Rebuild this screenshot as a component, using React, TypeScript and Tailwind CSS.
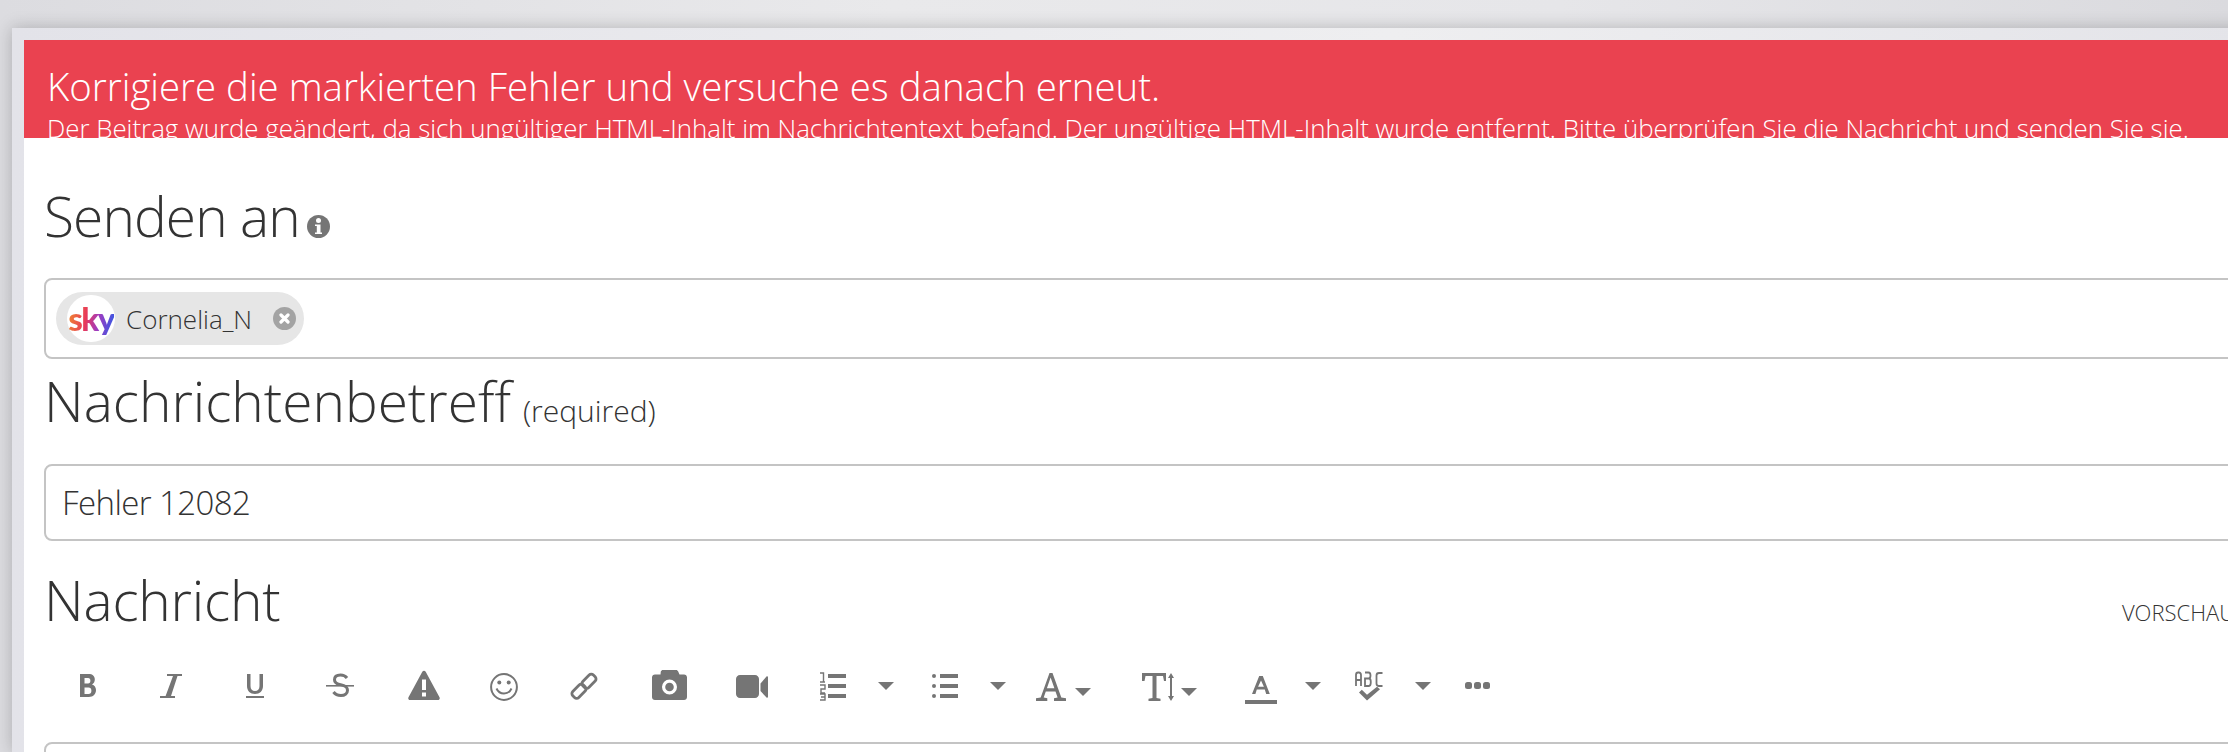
const FONT = "font-['Open_Sans',sans-serif]";

function Caret({ className }: { className: string }) {
  return (
    <svg className={`h-[32px] w-[16px] shrink-0 ${className}`} viewBox="0 0 16 32" fill="#757575">
      <path d="M0 0h16L8 8z" />
    </svg>
  );
}

function Glyph({ w, className, children }: { w: number; className: string; children: React.ReactNode }) {
  return (
    <svg className={`h-[32px] shrink-0 ${className}`} viewBox={`0 0 ${w} 32`} fill="#757575">
      {children}
    </svg>
  );
}

function Toolbar() {
  return (
    <div className="flex items-start pl-[36px] pt-[38px]">
      {/* bold */}
      <Glyph w={16} className="w-[16px]">
        <path fillRule="evenodd" d="M0 5h8.500c4 0 6.300 2 6.300 5.600 0 2.200-1 3.900-2.800 4.800 2.500.8 4 2.800 4 5.600 0 4.200-2.800 7-7.200 7H0zm4.500 4v5.500h3.600c1.500 0 2.300-1 2.300-2.800S9.600 9 8.100 9zm0 9.500V25h4c1.800 0 2.900-1.200 2.900-3.300s-1.100-3.200-2.900-3.200z" />
      </Glyph>
      {/* italic */}
      <Glyph w={22} className="ml-[64px] w-[22px]">
        <path d="M7 5h15v2h-4.500L11 27h4v2H0v-2h5.600L13 7H7z" />
      </Glyph>
      {/* underline */}
      <Glyph w={18} className="ml-[64px] w-[18px]">
        <path d="M1 5h3.500v12c0 3.200 1.800 5 4.500 5s4.500-1.800 4.500-5V5H17v12c0 5-3.300 8-8 8s-8-3-8-8zM0 27h18v2H0z" />
      </Glyph>
      {/* strike */}
      <Glyph w={28} className="ml-[62px] w-[28px]">
        <path d="M0 16h28v1.600H0z" />
        <path fill="none" stroke="#757575" strokeWidth="3" d="M21 9c-1.500-2-3.800-3-6.500-3-3.700 0-6 1.800-6 4.700 0 2.300 1.500 3.800 5 4.700l2 .5c4 1 6 2.700 6 5.300 0 3-2.500 5.300-6.600 5.300-3.300 0-5.800-1.300-7.400-3.500" />
      </Glyph>
      {/* warning */}
      <Glyph w={32} className="ml-[54px] w-[32px]">
        <path fillRule="evenodd" d="M14.300 2.800c.8-1.400 2.600-1.400 3.400 0l13.800 25.400c.7 1.300-.1 2.800-1.600 2.800H2.100C.6 31-.2 29.500.5 28.200zM14 10.500V21h4V10.500zM14 23.500V27.500h4v-4z" />
      </Glyph>
      {/* smile */}
      <Glyph w={28} className="ml-[50px] w-[28px]">
        <circle cx="14" cy="18" r="12.900" fill="none" stroke="#757575" strokeWidth="2" />
        <circle cx="9.300" cy="13.500" r="2" />
        <circle cx="18.700" cy="13.500" r="2" />
        <path fill="none" stroke="#757575" strokeWidth="2" d="M6.500 19.500c1.500 3.300 4.200 5 7.500 5s6-1.700 7.500-5" />
      </Glyph>
      {/* link */}
      <Glyph w={28} className="ml-[52px] w-[28px]">
        <rect x="11.500" y="8" width="15" height="8.500" rx="3" fill="none" stroke="#757575" strokeWidth="2.800" transform="rotate(-45 19 12.300)" />
        <rect x="1.500" y="18" width="15" height="8.500" rx="3" fill="none" stroke="#757575" strokeWidth="2.800" transform="rotate(-45 9 22.300)" />
      </Glyph>
      {/* camera */}
      <Glyph w={35} className="ml-[54px] w-[35px]">
        <path fillRule="evenodd" d="M11 1h13c1 0 1.800.6 2.200 1.500L27.500 5.500H32c1.700 0 3 1.300 3 3V28c0 1.700-1.300 3-3 3H3c-1.700 0-3-1.300-3-3V8.500c0-1.700 1.300-3 3-3h5.500l.3-3C9.200 1.600 10 1 11 1zm6.500 9.500a7.500 7.500 0 1 0 0 15 7.500 7.500 0 0 0 0-15zm0 3.200a4.300 4.300 0 1 1 0 8.600 4.300 4.300 0 0 1 0-8.600z" />
      </Glyph>
      {/* video */}
      <Glyph w={32} className="ml-[49px] w-[32px]">
        <path d="M4 6h15c2.200 0 4 1.800 4 4v15c0 2.200-1.800 4-4 4H4c-2.200 0-4-1.800-4-4V10c0-2.200 1.800-4 4-4zM24.500 14.500 30.500 7.500c.5-.5 1.500-.2 1.500.6v19.800c0 .8-1 1.100-1.500.6l-6-6.500z" />
      </Glyph>
      {/* ordered list */}
      <Glyph w={26} className="ml-[52px] w-[26px]">
        <path d="M8 5h18v4H8zM8 15h18v4H8zM8 25h18v4H8z" />
        <path fill="none" stroke="#757575" strokeWidth="1.400" d="M0 4h3.500v9M0 13h5M0 16h5v4H1v4h4M0 25h5v6H0M1 28h4" />
      </Glyph>
      <Caret className="ml-[32px] mt-[13px]" />
      {/* unordered list */}
      <Glyph w={26} className="ml-[38px] w-[26px]">
        <circle cx="2" cy="7" r="2" />
        <circle cx="2" cy="17" r="2" />
        <circle cx="2" cy="27" r="2" />
        <path d="M8 5h18v4H8zM8 15h18v4H8zM8 25h18v4H8z" />
      </Glyph>
      <Caret className="ml-[32px] mt-[13px]" />
      {/* font family */}
      <Glyph w={30} className="ml-[30px] w-[30px]">
        <path fillRule="evenodd" d="M13.500 4h3l8.800 24.600 4.700.6V32H18v-2.800l3.600-.6-2.100-6.100H9.800l-2.100 6.100 3.600.6V32H0v-2.800l4.700-.6zM14.600 8.500 10.900 19.300h7.500z" />
      </Glyph>
      <Caret className="ml-[9px] mt-[19px]" />
      {/* font size */}
      <Glyph w={32} className="ml-[51px] w-[32px]">
        <path d="M0 4h24v8h-2l-1-5h-6.500v22l4 .8V32H6.500v-2.200l4-.8V7H3.500l-1 5H0z" />
        <path d="M29 4l3 5h-2v18h2l-3 5-3-5h2V9h-2z" />
      </Glyph>
      <Caret className="ml-[7px] mt-[19px]" />
      {/* font colour */}
      <svg className="ml-[48px] h-[36px] w-[32px] shrink-0" viewBox="0 0 32 36" fill="#757575">
        <path fillRule="evenodd" d="M14.200 7h3.600l7 18h-3.600l-1.400-4.500h-8l-1.400 4.500H7zM16 11.500l-2.900 6.300h5.800z" />
        <path d="M0 31h32v4H0z" />
      </svg>
      <Caret className="ml-[28px] mt-[13px]" />
      {/* spell check */}
      <Glyph w={28} className="ml-[34px] w-[28px]">
        <path fill="none" stroke="#757575" strokeWidth="1.800" d="M1 17V6c0-1.500 1-2.500 2-2.500h1c1 0 2 1 2 2.500v11M1 11h5M10 3.500h3.500c1.500 0 2 1 2 3s-.5 3-2 3H10m0 0h4c1.200 0 1.800 1 1.800 3.500S15.200 17 14 17h-4zM27.500 4H24c-1.500 0-2.500 1-2.500 2.500v8c0 1.500 1 2.500 2.500 2.500h3.500" />
        <path d="M4 23.500l2.800-2.800 5.200 5 10-8 3 2.500L12 31.500z" />
      </Glyph>
      <Caret className="ml-[32px] mt-[13px]" />
      {/* more */}
      <Glyph w={25} className="ml-[34px] w-[25px]">
        <rect x="0" y="13" width="7" height="7" rx="2.500" />
        <rect x="9" y="13" width="7" height="7" rx="2.500" />
        <rect x="18" y="13" width="7" height="7" rx="2.500" />
      </Glyph>
    </div>
  );
}

export default function App() {
  return (
    <div className={`h-[752px] w-[2228px] overflow-hidden bg-[linear-gradient(90deg,#dcdce0,#e9e9eb_40%,#e6e6e9_70%,#dadade)] ${FONT}`}>
      <div className="ml-[12px] mt-[28px] w-[2300px] bg-[linear-gradient(90deg,#e3e3e9,#eeeef0_60%,#e4e4e9_97%)] pl-[12px] pt-[12px] shadow-[0_0_16px_rgba(0,0,0,0.22)]">
        <div className="h-[712px] bg-white text-[#333333]">
          <div className="h-[98px] overflow-hidden bg-[#ea4250] pl-[23px] pt-[20px] font-light text-white">
            <h1 className="text-[38.4px] leading-[52px]">Korrigiere die markierten Fehler und versuche es danach erneut.</h1>
            <p className="whitespace-nowrap text-[25.85px] leading-[32px]">
              Der Beitrag wurde geändert, da sich ungültiger HTML-Inhalt im Nachrichtentext befand. Der ungültige HTML-Inhalt wurde entfernt. Bitte überprüfen Sie die Nachricht und senden Sie sie.
            </p>
          </div>

          <div className="pl-[20px]">
            <div className="h-[140px] pt-[43px]">
              <div className="flex items-end">
                <h2 className="text-[55px] font-light leading-[70px] tracking-[-0.9px]">Senden an</h2>
                <svg className="mb-[13px] ml-[7px] h-[23px] w-[23px]" viewBox="0 0 23 23">
                  <circle cx="11.500" cy="11.500" r="11.500" fill="#757575" />
                  <circle cx="11.500" cy="5.500" r="2.500" fill="#fff" />
                  <path d="M8 9.500h5.500v8H15V19H8v-1.500h1.800V11H8z" fill="#fff" />
                </svg>
              </div>
            </div>

            <div className="flex h-[81px] items-center rounded-[8px] border-2 border-[#c4c4c4] pl-[10px]">
              <div className="flex h-[53px] w-[248px] items-center rounded-full bg-[#e6e6e6] pl-[11px]">
                <div className="flex h-[47px] w-[48px] items-center justify-center rounded-full bg-white">
                  <span className="bg-[linear-gradient(100deg,#f0902a,#e8395a_40%,#a03cc0_65%,#2a5be8)] bg-clip-text font-['Lato',sans-serif] text-[33px] font-black leading-none tracking-[-1.5px] text-transparent">sky</span>
                </div>
                <span className="ml-[11px] text-[26px] font-light leading-none">Cornelia_N</span>
                <span className="ml-[21px] flex h-[23px] w-[23px] items-center justify-center rounded-full bg-[#a3a3a3]">
                  <svg className="h-[11px] w-[11px]" viewBox="0 0 11 11">
                    <path d="M2 2l7 7M9 2l-7 7" stroke="#fff" strokeWidth="3.200" strokeLinecap="round" />
                  </svg>
                </span>
              </div>
            </div>

            <div className="flex h-[105px] items-baseline pt-[7px]">
              <h2 className="text-[55px] font-light leading-[70px]">Nachrichtenbetreff</h2>
              <span className="ml-[12px] text-[30px] font-light">(required)</span>
            </div>

            <div className="flex h-[77px] items-center rounded-[8px] border-2 border-[#c4c4c4] pl-[16px] text-[33px] font-light tracking-[-0.6px]">
              Fehler 12082
            </div>

            <div className="flex h-[90px] items-baseline justify-between pt-[24px]">
              <h2 className="text-[55px] font-light leading-[70px] tracking-[-0.2px]">Nachricht</h2>
              <span className="mr-[77px] text-[22px] font-light">VORSCHAU</span>
            </div>

            <Toolbar />

            <div className="mt-[22px] h-[60px] rounded-t-[8px] border-2 border-[#c4c4c4]" />
          </div>
        </div>
      </div>
    </div>
  );
}
